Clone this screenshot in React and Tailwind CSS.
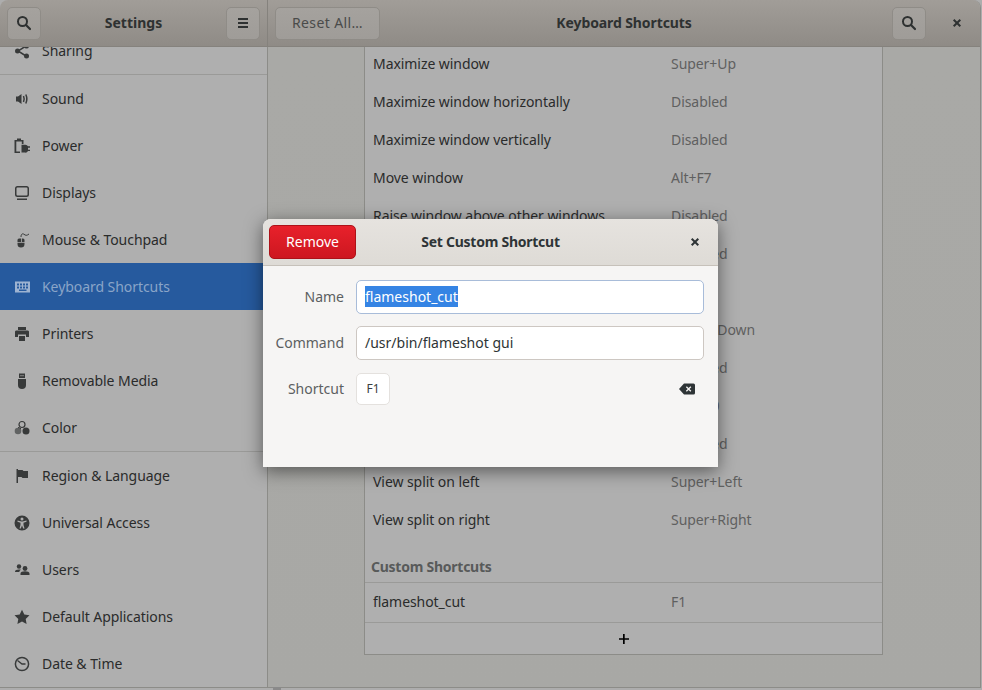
const Ic = ({ children, className = "" }) => (
  <svg width="16" height="16" viewBox="0 0 16 16" fill="currentColor" className={className}>{children}</svg>
);

const SearchIcon = () => (
  <Ic>
    <circle cx="6.500" cy="6.500" r="4.500" fill="none" stroke="currentColor" strokeWidth="2" />
    <path d="M10 10l4 4" stroke="currentColor" strokeWidth="2.200" strokeLinecap="round" />
  </Ic>
);

const CloseIcon = () => (
  <Ic>
    <path d="M4.700 4.700l6.600 6.600M11.300 4.700l-6.600 6.600" stroke="currentColor" strokeWidth="2" fill="none" />
  </Ic>
);

const icons = {
  share: (
    <Ic>
      <path d="M12 3L4 8l8 5" fill="none" stroke="currentColor" strokeWidth="1.500" />
      <circle cx="12.500" cy="3" r="2.500" /><circle cx="3.500" cy="8" r="2.500" /><circle cx="12.500" cy="13" r="2.500" />
    </Ic>
  ),
  sound: (
    <Ic>
      <path d="M2 5.500h2L7.500 3v10L4 10.500H2z" />
      <path d="M9.500 5c.8 1.800.8 4.200 0 6M11.800 3.500c1.300 2.800 1.300 6.200 0 9" fill="none" stroke="currentColor" strokeWidth="1.500" />
    </Ic>
  ),
  power: (
    <Ic>
      <path d="M0.500 2H3V.5h4V2h2.500v4H7.800V3.500H2.300v10H6V15H0.500z" />
      <path d="M7.500 6.800h3.500a3 3 0 013 1.500h2v1.400h-2v2h2v1.400h-2a3 3 0 01-3 1.500H7.500z" />
    </Ic>
  ),
  displays: (
    <Ic>
      <path fillRule="evenodd" d="M3.500 1h9A2.500 2.500 0 0115 3.500v6a2.500 2.500 0 01-2.500 2.500h-9A2.500 2.500 0 011 9.500v-6A2.500 2.500 0 013.500 1zm0 1.500A1 1 0 002.500 3.500v6a1 1 0 001 1h9a1 1 0 001-1v-6a1 1 0 00-1-1z" />
      <path d="M3 13.500h10V15H3z" />
    </Ic>
  ),
  mouse: (
    <Ic>
      <g transform="translate(2 0)">
        <path d="M3 6.500h2.200V10H1.500V8A1.500 1.500 0 013 6.500zM6 6.500h1A1.500 1.500 0 018.500 8v2H6zM1.500 10.800h7V12a3.500 3.500 0 01-7 0z" />
        <path d="M5 5c0-3 1.500-3.800 3-2.700s2.500 1.700 5-.3" fill="none" stroke="currentColor" strokeWidth="1" />
      </g>
    </Ic>
  ),
  keyboard: (
    <Ic>
      <path fillRule="evenodd" d="M1 2.500h15v11H1zM3 4.500v2h2v-2zm3 0v2h2v-2zm3 0v2h2v-2zm3 0v2h2v-2zM3 7.500v2h2v-2zm3 0v2h2v-2zm3 0v2h2v-2zm3 0v2h2v-2zM5 10.500v1.500h7.500v-1.500z" />
    </Ic>
  ),
  printer: (
    <Ic>
      <path d="M4 1h8v3H4zM1 5.500A1.500 1.500 0 012.500 4.500h11A1.500 1.500 0 0115 5.500V11h-3V8.500H4V11H1zM5 10h6v5H5z" />
    </Ic>
  ),
  usb: (
    <Ic>
      <path fillRule="evenodd" d="M5 0.500h6V5H5zM6.500 2v1.200h1V2zm2 0v1.200h1V2z" />
      <path d="M4 6h8v6a4 4 0 01-8 0z" />
    </Ic>
  ),
  color: (
    <Ic>
      <circle cx="8" cy="4.500" r="3" fill="none" stroke="currentColor" strokeWidth="1.200" />
      <circle cx="4" cy="11" r="3.300" opacity="0.65" />
      <circle cx="12" cy="11" r="3.500" />
      <path d="M4 7.500a3.500 3.500 0 013 1.500" fill="none" stroke="currentColor" />
    </Ic>
  ),
  flag: (
    <Ic>
      <path d="M2.500 1H4v14H2.500zM4 2h4.500l1 1H14v7H8.500l-1-1H4z" />
    </Ic>
  ),
  access: (
    <Ic>
      <path fillRule="evenodd" d="M8 0.500a7.500 7.500 0 110 15 7.500 7.500 0 010-15zM8 2.500a1.500 1.500 0 100 3 1.500 1.500 0 000-3zM3.500 5.500v1.200l3 1V10l-1 3.500h1.300L8 10.500l1.200 3h1.300l-1-3.500V7.700l3-1V5.500L8.500 6.500h-1z" />
    </Ic>
  ),
  users: (
    <Ic>
      <circle cx="5" cy="4.500" r="2.200" /><circle cx="11" cy="6.500" r="2.400" />
      <path d="M1 9.800C1 8.300 2.500 7.500 5 7.500c.9 0 1.500.1 2 .3-1.200.6-1.600 1.300-1.600 2.200H1zM6.500 13v-1.500c0-1.300 2-2.200 4.500-2.200s4.500.9 4.500 2.200V13z" />
    </Ic>
  ),
  star: (
    <Ic>
      <path d="M8 .8l2.300 4.800 5.200.7-3.800 3.600.9 5.200L8 12.600l-4.600 2.500.9-5.200L.5 6.300l5.200-.7z" />
    </Ic>
  ),
  clock: (
    <Ic>
      <circle cx="8" cy="8" r="6.600" fill="none" stroke="currentColor" strokeWidth="1.500" />
      <path d="M3.500 4.500L8 8l3.500 0" fill="none" stroke="currentColor" strokeWidth="1.300" />
    </Ic>
  ),
};

const sidebarTop = [
  ["sound", "Sound"],
  ["power", "Power"],
  ["displays", "Displays"],
  ["mouse", "Mouse & Touchpad"],
  ["keyboard", "Keyboard Shortcuts", true],
  ["printer", "Printers"],
  ["usb", "Removable Media"],
  ["color", "Color"],
];
const sidebarBottom = [
  ["flag", "Region & Language"],
  ["access", "Universal Access"],
  ["users", "Users"],
  ["star", "Default Applications"],
  ["clock", "Date & Time"],
];

const shortcuts = [
  ["Maximize window", "Super+Up"],
  ["Maximize window horizontally", "Disabled"],
  ["Maximize window vertically", "Disabled"],
  ["Move window", "Alt+F7"],
  ["Raise window above other windows", "Disabled"],
  ["Raise window if covered, otherwise lower it", "Disabled"],
  ["Resize window", "Alt+F8"],
  ["Restore window", "Super+Down"],
  ["Toggle fullscreen", "Disabled"],
  ["Toggle maximization state", "Alt+F10"],
  ["Toggle window on all workspaces", "Disabled"],
  ["View split on left", "Super+Left"],
  ["View split on right", "Super+Right"],
];

function SideRow({ icon, label, active }) {
  return (
    <div className={`h-[47px] flex items-center pl-[14px] tracking-[-0.06px] ${active ? "bg-[#265a9e] text-[#8aa5c8]" : "text-[#2a2b2b]"}`}>
      <span className={`w-[28px] flex ${active ? "text-[#9db3d1]" : "text-[#383a3a]"}`}>{icons[icon]}</span>
      <span>{label}</span>
    </div>
  );
}

function HeadButton({ children, className = "" }) {
  return (
    <div className={`h-[33px] flex items-center justify-center rounded-[5px] border border-[#8f8c87] bg-gradient-to-b from-[#a5a29e] to-[#9f9c98] ${className}`}>
      {children}
    </div>
  );
}

export default function App() {
  return (
    <div className="relative w-[982px] h-[690px] overflow-hidden bg-[#adadad] text-[14px] font-['Noto_Sans',sans-serif]">
      <div className="absolute left-[273px] top-[687px] w-[8px] h-[3px] bg-[#8a8a8a]" />
      <div className="h-[688px] flex flex-col overflow-hidden rounded-t-[8px] border-b border-r border-[#8c8c88] mr-px">
        {/* header */}
        <div className="h-[47px] shrink-0 flex border-b border-[#85827d] bg-gradient-to-b from-[#a19d98] to-[#8f8b86]">
          <div className="w-[268px] shrink-0 flex items-center justify-between px-[7px] border-r border-[#85827d] text-[#2e3131]">
            <HeadButton className="w-[34px]"><SearchIcon /></HeadButton>
            <span className="font-bold pb-[2px]">Settings</span>
            <HeadButton className="w-[34px]">
              <Ic><path d="M3 3h10v2H3zM3 7h10v2H3zM3 11h10v2H3z" /></Ic>
            </HeadButton>
          </div>
          <div className="flex-1 grid grid-cols-[1fr_auto_1fr] items-center pl-[7px] pr-[7px] text-[#2e3131]">
            <HeadButton className="w-[105px] text-[#4a4b4a] tracking-[0.4px] pb-[2px]">Reset All…</HeadButton>
            <span className="font-bold tracking-[-0.1px] pb-[2px]">Keyboard Shortcuts</span>
            <div className="flex items-center justify-end">
              <HeadButton className="w-[34px] mr-[23px]"><SearchIcon /></HeadButton>
              <span className="w-[16px] mr-[8px] flex"><CloseIcon /></span>
            </div>
          </div>
        </div>
        {/* body */}
        <div className="flex-1 min-h-0 flex">
          <div className="w-[268px] shrink-0 overflow-hidden border-r border-[#8c8c88] bg-[#afafaf]">
            <div className="-mt-[20px]">
              <SideRow icon="share" label="Sharing" />
              <div className="h-px bg-[#9a9a98]" />
              {sidebarTop.map(([icon, label, active]) => (
                <SideRow key={label} icon={icon} label={label} active={active} />
              ))}
              <div className="h-px bg-[#9a9a98]" />
              {sidebarBottom.map(([icon, label]) => (
                <SideRow key={label} icon={icon} label={label} />
              ))}
            </div>
          </div>
          <div className="flex-1 overflow-hidden pl-[96px] pr-[97px] bg-gradient-to-b from-[#a9a9a6] to-[#a8a8a5]">
            <div className="-mt-[3px] border-x border-b border-[#8c8c88] bg-[#afafaf] tracking-[-0.06px]">
              {shortcuts.map(([name, key]) => (
                <div key={name} className="h-[38px] flex items-center pl-[8px]">
                  <span className="w-[298px] shrink-0 text-[#2a2b2b] whitespace-nowrap">{name}</span>
                  <span className="text-[#5f6060]">{key}</span>
                </div>
              ))}
              <div className="h-[44px] px-[6px] flex items-end pb-[5px]">
                <span className="font-bold tracking-[-0.25px] text-[#585a5a]">Custom Shortcuts</span>
              </div>
              <div className="h-[40px] pb-[2px] flex items-center pl-[8px] border-t border-[#9a9a98]">
                <span className="w-[298px] text-[#2a2b2b]">flameshot_cut</span>
                <span className="text-[#5f6060]">F1</span>
              </div>
              <div className="h-[32px] flex items-center justify-center border-t border-[#9a9a98] text-black">
                <svg width="12" height="12" viewBox="0 0 12 12" fill="currentColor"><path d="M5 1h1.700v4.200H11v1.600H6.700V11H5V6.800H1V5.200h4z" /></svg>
              </div>
            </div>
          </div>
        </div>
      </div>

      {/* modal dialog */}
      <div className="absolute left-[263px] top-[219px] w-[455px] h-[248px] flex flex-col rounded-t-[8px] bg-[#f6f5f4] shadow-[0_4px_18px_rgba(0,0,0,0.5)]">
        <div className="h-[47px] shrink-0 grid grid-cols-[1fr_auto_1fr] items-center px-[6px] rounded-t-[8px] border-b border-[#c6c1ba] bg-gradient-to-b from-[#e6e3df] to-[#dedbd6]">
          <div className="w-[87px] h-[34px] pb-[2px] flex items-center justify-center rounded-[5px] border border-[#ad1218] bg-gradient-to-b from-[#e8212b] to-[#cd1720] text-white">Remove</div>
          <span className="font-bold tracking-[-0.25px] text-[#2e3436] pb-[2px]">Set Custom Shortcut</span>
          <span className="flex justify-end pr-[9px] text-[#2e3436]"><CloseIcon /></span>
        </div>
        <div className="flex-1 grid grid-cols-[81px_348px] gap-x-[12px] gap-y-[12px] content-start pt-[14px] text-[#2e3436]">
          <span className="h-[34px] pb-[2px] flex items-center justify-end text-[#5c6061]">Name</span>
          <div className="h-[34px] pb-[2px] flex items-center px-[8px] bg-white rounded-[5px] border border-[#a8bcd9]">
            <span className="bg-[#3584e4] text-white">flameshot_cut</span>
          </div>
          <span className="h-[34px] pb-[2px] flex items-center justify-end text-[#5c6061]">Command</span>
          <div className="h-[34px] pb-[2px] flex items-center px-[8px] bg-white rounded-[5px] border border-[#cdc7c2]">/usr/bin/flameshot gui</div>
          <span className="h-[32px] flex items-center justify-end text-[#5c6061]">Shortcut</span>
          <div className="h-[32px] mt-px flex items-center justify-between">
            <span className="w-[34px] h-[32px] flex items-center justify-center bg-white rounded-[5px] border border-[#e4e1de] text-[12px] text-[#3a3e40]">F1</span>
            <svg width="16" height="12" viewBox="0 0 16 12" className="mr-[9px] text-[#2e3436]" fill="currentColor">
              <path fillRule="evenodd" d="M5 0.500h9.500A1.500 1.500 0 0116 2v8a1.500 1.500 0 01-1.500 1.500H5L0 6zM7.800 3.300L6.900 4.200 8.700 6l-1.800 1.800.9.900L9.600 6.900l1.800 1.800.9-.9L10.500 6l1.800-1.800-.9-.9-1.800 1.800z" />
            </svg>
          </div>
        </div>
      </div>
    </div>
  );
}
